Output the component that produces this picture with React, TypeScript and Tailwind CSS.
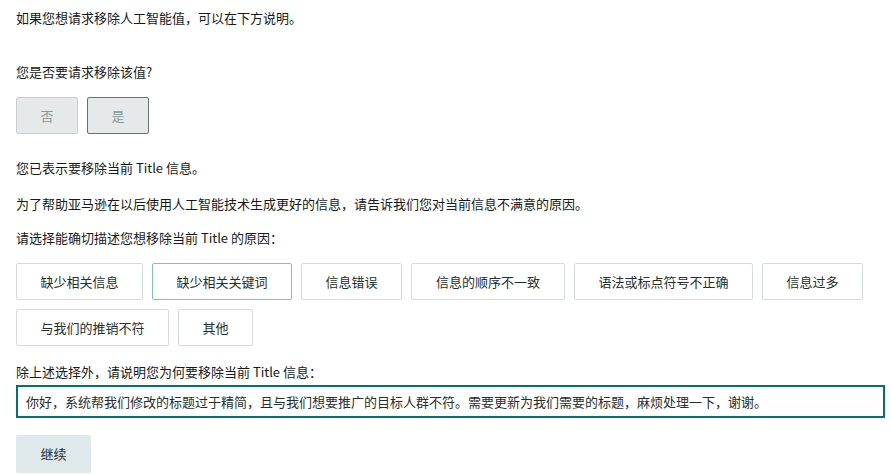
import React from "react";

const reasons1 = ["缺少相关信息", "缺少相关关键词", "信息错误", "信息的顺序不一致", "语法或标点符号不正确", "信息过多"];
const widths1 = ["w-[127px]", "w-[140px]", "w-[101px]", "w-[154px]", "w-[179px]", "w-[101px]"];
const reasons2 = ["与我们的推销不符", "其他"];
const widths2 = ["w-[153px]", "w-[75px]"];

export default function App() {
  return (
    <div
      className="w-[891px] h-[475px] bg-white overflow-hidden px-4 pt-2 text-[13px] leading-[20px] text-[#16191a]"
      style={{ fontFamily: '"Noto Sans CJK SC", "Noto Sans", sans-serif' }}
    >
      <p>如果您想请求移除人工智能值，可以在下方说明。</p>
      <p className="mt-[34px]">您是否要请求移除该值?</p>
      <div className="mt-[15px] flex gap-[9px]">
        <button className="w-[62px] h-[37px] bg-[#e6e9ea] border border-[#c9cfd0] rounded-[2px] text-[#889696]">否</button>
        <button className="w-[62px] h-[37px] bg-[#e6e9ea] border border-[#6f6f6f] rounded-[2px] text-[#889696]">是</button>
      </div>
      <p className="mt-[24px]">您已表示要移除当前 Title 信息。</p>
      <p className="mt-[16px]">为了帮助亚马逊在以后使用人工智能技术生成更好的信息，请告诉我们您对当前信息不满意的原因。</p>
      <p className="mt-[14px]">请选择能确切描述您想移除当前 Title 的原因：</p>
      <div className="mt-[15px] flex gap-[9px]">
        {reasons1.map((r, i) => (
          <button
            key={r}
            className={`${widths1[i]} h-[37px] bg-white border rounded-[2px] text-[#232f30] ${i === 1 ? "border-[#7cc3bd]" : "border-[#d5dbdb]"}`}
          >
            {r}
          </button>
        ))}
      </div>
      <div className="mt-[9px] flex gap-[9px]">
        {reasons2.map((r, i) => (
          <button
            key={r}
            className={`${widths2[i]} h-[37px] bg-white border border-[#d5dbdb] rounded-[2px] text-[#232f30]`}
          >
            {r}
          </button>
        ))}
      </div>
      <p className="mt-[16px]">除上述选择外，请说明您为何要移除当前 Title 信息：</p>
      <div className="mt-[3px] w-[869px] h-[33px] border-2 border-[#00707f] flex items-center px-[8px] text-[#232f30] text-[13px]">
        你好，系统帮我们修改的标题过于精简，且与我们想要推广的目标人群不符。需要更新为我们需要的标题，麻烦处理一下，谢谢。
      </div>
      <button className="mt-[17px] w-[75px] h-[38px] bg-[#dfe8ea] rounded-[2px] text-[#232f30]">继续</button>
    </div>
  );
}
